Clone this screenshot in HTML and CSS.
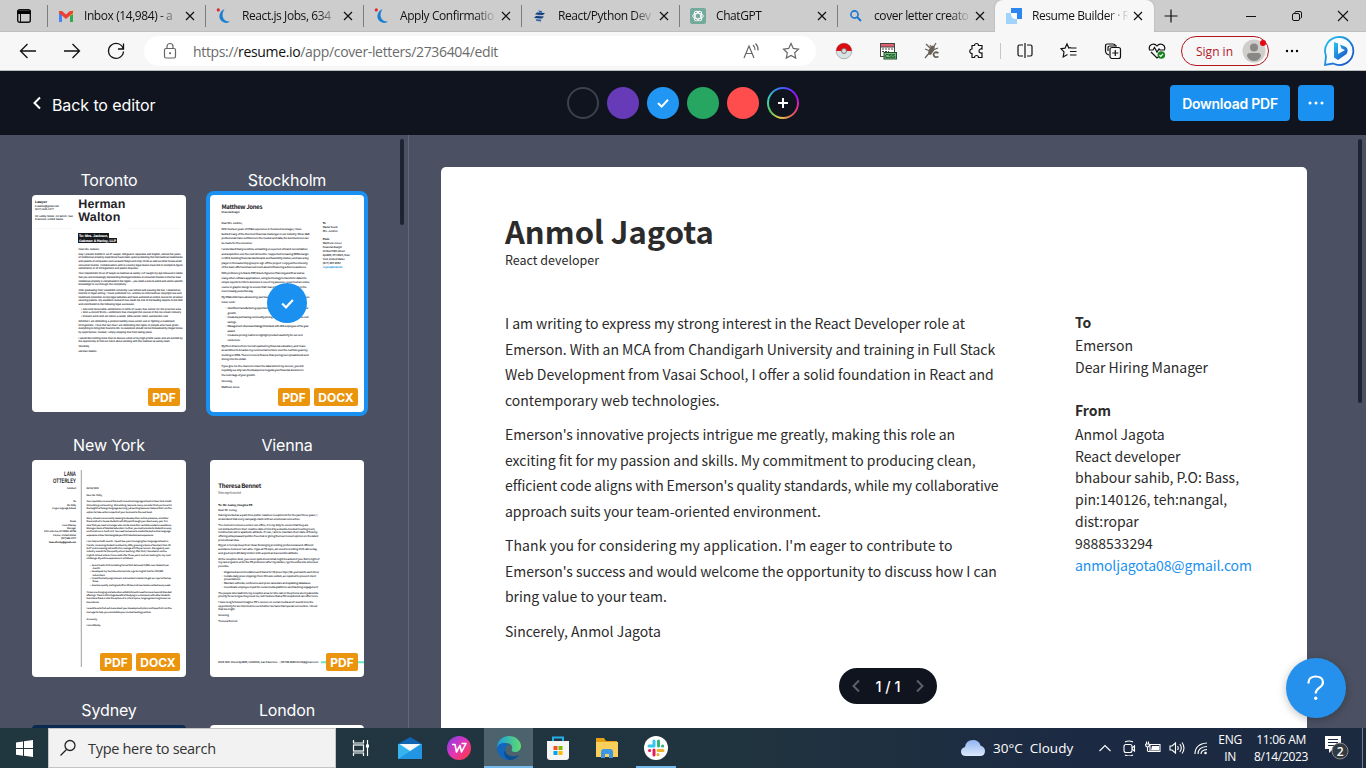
FILE: index.html
```html
<!DOCTYPE html>
<html lang="en">
<head>
<meta charset="utf-8">
<title>Resume Builder · Resume.io</title>
<link rel="stylesheet" href="styles.css">
</head>
<body>
<svg class="defs" width="0" height="0">
  <defs>
    <symbol id="x" viewBox="0 0 10 10"><path d="M1 1l8 8M9 1l-8 8" stroke="#111" stroke-width="1.2" fill="none"/></symbol>
    <symbol id="swoosh" viewBox="0 0 16 16"><path d="M8.500 1C2 4 1.500 12 8 14.500c2.500.8 4.500.3 6-1-4 .2-6.500-1.500-7.300-5C6.200 6 7 3.500 8.500 1z" fill="#1c7fd0"/><circle cx="2.300" cy="1.900" r="1.600" fill="#e0262d"/></symbol>
    <symbol id="tick" viewBox="0 0 14 14"><path d="M2 7l3.600 3.600L12 3.800" stroke="#fff" stroke-width="2" fill="none"/></symbol>
    <linearGradient id="bing" x1="0" y1="0" x2="1" y2="1"><stop offset="0" stop-color="#25c6ee"/><stop offset="1" stop-color="#1b48c8"/></linearGradient>
    <linearGradient id="edge" x1="0" y1="0" x2="1" y2="0"><stop offset="0" stop-color="#1b9de2"/><stop offset="1" stop-color="#5fdc6b"/></linearGradient>
    <linearGradient id="wps" x1="0" y1="0" x2="1" y2="1"><stop offset="0" stop-color="#7a3cf0"/><stop offset=".5" stop-color="#e436b4"/><stop offset="1" stop-color="#ff3a2e"/></linearGradient>
    <linearGradient id="cloud" x1="0" y1="0" x2="0" y2="1"><stop offset="0" stop-color="#8fb4f0"/><stop offset="1" stop-color="#dde9fc"/></linearGradient>
  </defs>
</svg>

<div class="tabs">
  <div class="tab-menu"><svg width="16" height="16" viewBox="0 0 16 16"><rect x="1.700" y="1.700" width="12.600" height="12.600" rx="2" fill="none" stroke="#111" stroke-width="1.400"/><path d="M1.500 2.500h13V6h-13z"/><path d="M4.500 6v8" stroke="#111"/></svg></div>
  <div class="tab"><svg class="fav" viewBox="0 0 16 16"><path d="M1 3v11h3V6z" fill="#4285f4"/><path d="M15 3v11h-3V6z" fill="#34a853"/><path d="M12 4l3-2v4l-3 2z" fill="#fbbc04"/><path d="M1 3l3 0 4 3.500L12 3h3v2L8 11 1 5z" fill="#ea4335"/></svg><span class="tab-text">Inbox (14,984) - a</span><svg class="close"><use href="#x"/></svg></div>
  <div class="tab"><svg class="fav"><use href="#swoosh"/></svg><span class="tab-text">React.js Jobs, 634</span><svg class="close"><use href="#x"/></svg></div>
  <div class="tab"><svg class="fav"><use href="#swoosh"/></svg><span class="tab-text">Apply Confirmatio</span><svg class="close"><use href="#x"/></svg></div>
  <div class="tab"><svg class="fav" viewBox="0 0 16 16"><path d="M6 1l4 2-1 12-4-2z" fill="#a9b9cf"/><path d="M5 4.500l8 .5-2 2-8-.5zM4 8l8 .5-2 2-8-.5z" fill="#123c7c"/><path d="M7 3.500l3 .5M4 12l5 .5" stroke="#2c62ad" stroke-width="1.300"/></svg><span class="tab-text">React/Python Dev</span><svg class="close"><use href="#x"/></svg></div>
  <div class="tab"><svg class="fav" viewBox="0 0 16 16"><rect width="16" height="16" rx="2" fill="#74aa9c"/><g fill="none" stroke="#fff" stroke-width=".9"><ellipse cx="8" cy="8" rx="5.300" ry="2.700"/><ellipse cx="8" cy="8" rx="5.300" ry="2.700" transform="rotate(60 8 8)"/><ellipse cx="8" cy="8" rx="5.300" ry="2.700" transform="rotate(120 8 8)"/></g></svg><span class="tab-text">ChatGPT</span><svg class="close"><use href="#x"/></svg></div>
  <div class="tab"><svg class="fav" viewBox="0 0 16 16"><circle cx="6.500" cy="6.500" r="3.600" fill="none" stroke="#1a76d2" stroke-width="1.600"/><path d="M9 9l4 4" stroke="#1a76d2" stroke-width="2"/></svg><span class="tab-text">cover letter creato</span><svg class="close"><use href="#x"/></svg></div>
  <div class="tab active"><svg class="fav" viewBox="0 0 16 16"><path d="M5 0h11v11h-5L5 5z" fill="#2c87f0"/><path d="M0 5h5c0 4 2 6 6 6v5H0z" fill="#a2d3fb"/><path d="M5 5h6v6c-4 0-6-2-6-6z" fill="#fff"/></svg><span class="tab-text">Resume Builder · R</span><svg class="close"><use href="#x"/></svg></div>
  <div class="new-tab"><svg width="14" height="14" viewBox="0 0 14 14"><path d="M7 .5v13M.5 7h13" stroke="#111" stroke-width="1.200"/></svg></div>
  <div class="window">
    <svg viewBox="0 0 12 12"><path d="M1 6.500h10" stroke="#111"/></svg>
    <svg viewBox="0 0 12 12"><g fill="none" stroke="#111"><rect x="1.500" y="3.500" width="7" height="7" rx="1.500"/><path d="M4 3V2.500Q4 1.500 5 1.500h4q1.500 0 1.500 1.500v4q0 1-1 1.500"/></g></svg>
    <svg viewBox="0 0 12 12"><path d="M1 1l10 10M11 1L1 11" stroke="#111" stroke-width="1.100"/></svg>
  </div>
</div>

<div class="toolbar">
  <div class="nav">
    <svg viewBox="0 0 18 18"><path d="M17 9H1.500M8.500 2l-7 7 7 7" /></svg>
    <svg viewBox="0 0 18 18"><path d="M1 9h15.500M9.500 2l7 7-7 7"/></svg>
    <svg viewBox="0 0 18 18"><path d="M16.300 7A7.500 7.500 0 1 0 16.500 9.500M16.500 1.500v5.500H11"/></svg>
  </div>
  <div class="address">
    <svg class="lock" viewBox="0 0 16 18"><g fill="none" stroke="#666" stroke-width="1.200"><rect x="2.500" y="6.500" width="11" height="9.500" rx="1.500"/><path d="M5 6.500V4.500a3 3 0 0 1 6 0v2"/></g><circle cx="8" cy="11.200" r="1" fill="#555"/></svg>
    <span class="url">https://<b>resume.io</b>/app/cover-letters/2736404/edit</span>
    <svg class="read" viewBox="0 0 18 18"><g fill="none" stroke="#666" stroke-width="1.200"><path d="M2 16L7 4l5 12M4 11.500h6M11 3q2 2 2 5M13.500 1.500q3 3 2.500 7"/></g></svg>
    <svg class="star" viewBox="0 0 18 18"><path d="M9 1.500l2.300 4.900 5.200.7-3.800 3.700 1 5.300L9 13.500l-4.700 2.600 1-5.300L1.500 7.100l5.200-.7z" fill="none" stroke="#666" stroke-width="1.200"/></svg>
  </div>
  <div class="extensions">
    <span><svg viewBox="0 0 18 18"><circle cx="9" cy="9" r="7.800" fill="#d9e2e4" stroke="#777" stroke-width=".5"/><path d="M1.200 9a7.800 7.800 0 0 1 15.600 0z" fill="#dc0d12"/><circle cx="9" cy="9" r="2.500" fill="#ddd" stroke="#777"/></svg></span>
    <span><svg viewBox="0 0 18 18"><rect x="1.500" y="1.500" width="14" height="13" fill="#fff" stroke="#444"/><path d="M1.500 1.500h14v3.500h-14z" fill="#dc5f6e" stroke="#444"/><path d="M3 7h11M3 9.500h7" stroke="#444" stroke-dasharray="2 1"/><rect x="5" y="10.500" width="12.500" height="6.500" fill="#6fc27a" stroke="#244f2c"/><text x="6" y="16" font-size="5.500" font-weight="700" textLength="10.500" fill="#143c1c" font-family="Liberation Sans">CSS</text></svg></span>
    <span><svg viewBox="0 0 18 18"><g stroke="#675e56" stroke-width="1.200" fill="none"><path d="M3 2l4 4M13 1l-3 5M2 7l5 2M15 6l-5 2M2 16l5-6M7 3l2 3"/></g><ellipse cx="8.500" cy="8" rx="2.500" ry="5" fill="#675e56" transform="rotate(25 8 8)"/><path d="M15.500 11q-4-2-5 1.500 1 4 5 2" fill="none" stroke="#f7f7f7" stroke-width="3.500"/><path d="M15.500 11q-4-2-5 1.500 1 4 5 2" fill="none" stroke="#675e56" stroke-width="1.800"/></svg></span>
    <span><svg viewBox="0 0 18 18" class="line"><path d="M5 3.500h2.500a2 2 0 1 1 4 0h3.500v3.500c-4-.8-4 4.600 0 4v4.500h-3.500a2 2 0 1 0-4 0H5V11.500a2 2 0 1 1 0-4.500z"/></svg></span>
    <i class="divider"></i>
    <span><svg viewBox="0 0 18 18" class="line"><path d="M7 3H3.500Q2 3 2 4.500v8Q2 14 3.500 14H7M11 3h3.500Q16 3 16 4.500v8q0 1.500-1.500 1.500H11M9 1v15"/></svg></span>
    <span><svg viewBox="0 0 18 18" class="line"><path d="M11 5.500L8.800 6 7 2 5 6.200l-4 .5 3 3.200-.8 5L7.500 12.500M10.500 6h6M10 9.500h6.500M10 13h6.500"/></svg></span>
    <span><svg viewBox="0 0 18 18" class="line"><path d="M5 13L3 12Q1.500 11 1.500 9V4q0-2 2-2H9q2 0 2.500 2"/><path d="M4 9V6q0-2 2-2h7"/><rect x="6" y="5.500" width="10.500" height="11" rx="2"/><path d="M11.300 8v6M8.300 11h6"/></svg></span>
    <span><svg viewBox="0 0 18 18" class="line"><path d="M1.500 7.500C0 3 6 0 9 4c3-4 9-1 7.500 3.500M1 8h4l1.500-2.500L9 10l2-3 1 1h5M3 10l6 6 2-1.500"/><circle cx="13.300" cy="13" r="3.800" fill="#16831f" stroke="none"/><path d="M11.500 13l1.300 1.300 2.200-2.500" stroke="#fff"/></svg></span>
  </div>
  <div class="signin"><span>Sign in</span><svg width="24" height="24" viewBox="0 0 24 24"><circle cx="12" cy="12" r="11.500" fill="#d0cecb"/><circle cx="12" cy="8.500" r="4" fill="#8a8886"/><path d="M5 17q0-3 3-3h8q3 0 3 3-2 5-7 5t-7-5z" fill="#8a8886"/><circle cx="21" cy="4" r="3" fill="#e30613"/></svg></div>
  <svg class="more" viewBox="0 0 14 4"><circle cx="2" cy="2" r="1.200"/><circle cx="7" cy="2" r="1.200"/><circle cx="12" cy="2" r="1.200"/></svg>
  <svg class="bing" viewBox="0 0 32 32"><path d="M16 2a14 14 0 1 1-6 26.500L2 30l1-9A14 14 0 0 1 16 2z" fill="#f9fcff" stroke="url(#bing)" stroke-width="1.800"/><path d="M11 7l4 1.500V19l7-4-3.500-1.500L17 9.500 23 12q3 3 .5 7L15 25l-4-2.500z" fill="url(#bing)"/></svg>
</div>

<header class="header">
  <div class="back"><svg width="10" height="14" viewBox="0 0 10 14"><path d="M8 1.500L2.500 7 8 12.500" fill="none" stroke="#fff" stroke-width="2"/></svg><span>Back to editor</span></div>
  <div class="colors">
    <i class="c-dark"></i><i class="c-purple"></i><i class="c-blue"><svg width="14" height="14"><use href="#tick"/></svg></i><i class="c-green"></i><i class="c-red"></i>
    <i class="c-any"><b><svg width="10" height="10" viewBox="0 0 10 10"><path d="M5 0v10M0 5h10" stroke="#fff" stroke-width="2"/></svg></b></i>
  </div>
  <div class="actions"><button class="download"><span>Download PDF</span></button><button class="dots"><svg width="16" height="4" viewBox="0 0 16 4"><g fill="#fff"><circle cx="2" cy="2" r="1.500"/><circle cx="8" cy="2" r="1.500"/><circle cx="14" cy="2" r="1.500"/></g></svg></button></div>
</header>

<main class="workspace">
  <aside class="sidebar">
    <div class="card"><h3>Toronto</h3><div class="thumb">
      <svg class="page toronto" viewBox="0 0 154 217">
        <g class="big"><text x="46.300" y="13.300" textLength="47">Herman</text><text x="46.300" y="25.700" textLength="42">Walton</text></g>
        <g class="s"><text x="3" y="8" class="b lead" textLength="12">Lawyer</text><text x="3" y="11.800" textLength="24">h.walton@gmail.com</text><text x="3" y="15.300" textLength="19">(917) 605-1277</text><text x="3" y="21.500" textLength="38">32 Ludley Street, CA 94101, San</text><text x="3" y="25" textLength="28">Francisco, United States</text></g>
        <path d="M3 33.500h38M96 33.500h53" stroke="#eee" stroke-width=".5"/>
        <path d="M46 38h31v5H46zM46 43h39v5H46z" fill="#16181d"/>
        <g class="s b inv"><text x="47" y="41.800" textLength="29">To: Mrs. Jackson,</text><text x="47" y="46.700" textLength="37">Oakman &amp; Harley, LLP</text></g>
        <g class="s"><text x="46.500" y="54.600" textLength="21">Dear Mrs. Jackson,</text>
        <text x="46.500" y="59.800" textLength="102">May I present Exhibit A: an IP Lawyer, bilingual in Japanese and English, whose five years</text><text x="46.500" y="63.400" textLength="104">of intellectual property experience have been spent protecting the international trademarks</text><text x="46.500" y="67" textLength="103">and patents of companies such as Bank Tokyo and Crop Circle as well as other house-sized</text><text x="46.500" y="70.500" textLength="104">consumer brands. Collaborations with in-country legal teams have led to multiple 5-figure</text><text x="46.500" y="74" textLength="60">settlements in IP infringement and patent disputes.</text>
        <text x="46.500" y="79.300" textLength="104">Your requirement for an IP lawyer at Oakman &amp; Harley LLP caught my eye because it needs</text><text x="46.500" y="82.900" textLength="103">that you are increasingly representing the legal interests of consumer brands in the Far East.</text><text x="46.500" y="86.500" textLength="104">Intellectual property is complicated in the region – you need a one-of-a-kind and sector-specific</text><text x="46.500" y="90" textLength="48">knowledge to cut through the complexity.</text>
        <text x="46.500" y="95.500" textLength="102">After graduating from Vanderbilt University Law School and passing the bar, I retained an</text><text x="46.500" y="99" textLength="103">interest in legal writing. I have published 10+ articles on international copyright law and</text><text x="46.500" y="102.500" textLength="104">trademark protection on top legal websites and have authored an online course for all about</text><text x="46.500" y="106" textLength="104">securing patents. My academic research has made me one of the leading experts in the field</text><text x="46.500" y="109.500" textLength="56">and contributed to the following legal successes:</text>
        <text x="49" y="114.600" textLength="100">•  Secured favourable settlements in 92% of cases that center for the practice area</text><text x="49" y="118.300" textLength="100">•  Won a record $10m+ settlement that changed the course of the ice-cream industry</text><text x="49" y="122" textLength="87">•  Present work with all clients a week, 95% career client satisfaction rate</text>
        <text x="46.500" y="127" textLength="96">Whether I am defending a product liability class action suit or fighting a trademark</text><text x="46.500" y="130.600" textLength="100">infringement, I love the fact that I am defending the rights of people who have given</text><text x="46.500" y="134.200" textLength="104">everything to bring their brand to life. Its existence should not be threatened by illegal forces</text><text x="46.500" y="137.800" textLength="74">by opportunists. Instead, I enjoy stopping that from taking place.</text>
        <text x="46.500" y="143.500" textLength="104">I would like nothing more than to discuss some of my high-profile cases and am excited by</text><text x="46.500" y="147" textLength="92">the opportunity to find out more about working with the Oakman &amp; Harley team.</text><text x="46.500" y="152" textLength="11">Sincerely,</text><text x="46.500" y="157.200" textLength="18">Herman Walton</text></g>
      </svg>
      <div class="badges"><b class="pdf">PDF</b></div></div></div>
    <div class="card selected"><h3>Stockholm</h3><div class="thumb">
      <svg class="page" viewBox="0 0 154 217">
        <text x="11.500" y="14" class="name" textLength="41">Matthew Jones</text>
        <g class="s"><text x="11.500" y="18" textLength="18">Financial Analyst</text><text x="11.500" y="29" textLength="21">Dear Mrs. Jenkins,</text>
        <text x="11.500" y="35.300" textLength="80">With fourteen years of FP&amp;A experience in food and beverages, I have</text><text x="11.500" y="39.700" textLength="88">tackled many of the thorniest financial challenges in our industry. When F&amp;B</text><text x="11.500" y="44.200" textLength="87">professionals have confidence in the models and data, the best decisions can</text><text x="11.500" y="48.800" textLength="31">be made for the consumer.</text>
        <text x="11.500" y="55" textLength="86">I understand that you will be embarking on a period of brand consolidation</text><text x="11.500" y="59.500" textLength="87">and acquisition over the next 18 months. I supported increasing 500% margin</text><text x="11.500" y="64" textLength="87">in 2015, building financial dashboards and feasibility studies, and was a key</text><text x="11.500" y="68.500" textLength="86">player in the leadership group to sign off the project. I enjoyed the intensity</text><text x="11.500" y="73" textLength="85">of the team effort and learned much about influencing a diverse audience.</text>
        <text x="11.500" y="79.200" textLength="83">With proficiency in Oracle ERP, Oracle Hyperion Planning and BI as well as</text><text x="11.500" y="83.700" textLength="85">many other software applications, using technology to transform data into</text><text x="11.500" y="88.200" textLength="88">simple reports to inform decisions is one of my passions. I even took an online</text><text x="11.500" y="92.700" textLength="85">course in graphic design to ensure that I was presenting my findings in the</text><text x="11.500" y="97.200" textLength="32">most visually powerful way.</text>
        <text x="11.500" y="103.300" textLength="88">My FP&amp;A skills have allowed my past teams to excel at the following business</text><text x="11.500" y="107.700" textLength="14">lower costs:</text>
        <text x="14.500" y="114" textLength="84">•  Identified manufacturing opportunities to reduce costs and increase our</text><text x="17.500" y="118.500" textLength="9">growth.</text><text x="14.500" y="123" textLength="84">•  Created a purchasing commodity pricing tool and dashboard to drive cost</text><text x="17.500" y="127.500" textLength="9">savings.</text><text x="14.500" y="132" textLength="84">•  Management of annual strategy think tank with 200 employees of the year</text><text x="17.500" y="136.500" textLength="8">award.</text><text x="14.500" y="141.200" textLength="78">•  Created a pricing matrix to highlight product elasticity for our end</text><text x="17.500" y="145.700" textLength="13">customers.</text>
        <text x="11.500" y="151.800" textLength="84">My BS in Finance from Cornell sparked my financial education, and I have</text><text x="11.500" y="156.300" textLength="86">an ambition to broaden my commercial horizons over the next two years by</text><text x="11.500" y="160.800" textLength="87">working on MBA. There is more to finance than poring over spreadsheets and</text><text x="11.500" y="165.300" textLength="25">diving into the detail.</text>
        <text x="11.500" y="171.500" textLength="82">If you give me the chance to share the data behind my success, you will</text><text x="11.500" y="176" textLength="82">hopefully see why I am the ideal person to guide your financial decisions in</text><text x="11.500" y="180.500" textLength="34">the next stage of your growth.</text><text x="11.500" y="186.500" textLength="11">Sincerely,</text><text x="11.500" y="192.700" textLength="18">Matthew Jones</text>
        <text x="112.700" y="29" class="b">To</text><text x="112.700" y="33.200" textLength="15">Master Foods</text><text x="112.700" y="37.300" textLength="15">Mrs. Jenkins</text><text x="112.700" y="45" class="b">From</text><text x="112.700" y="49" textLength="19">Matthew Jones</text><text x="112.700" y="53" textLength="19">Financial Analyst</text><text x="112.700" y="57" textLength="22">24 West 78th Street</text><text x="112.700" y="61" textLength="27">Apt#3B, NY 10024, New</text><text x="112.700" y="65" textLength="22">York, United States</text><text x="112.700" y="69" textLength="18">(917) 397-3552</text><text x="112.700" y="73" textLength="20" class="mail">m.jones@mail.com</text></g>
      </svg>
      <i class="chosen"><svg width="15" height="15"><use href="#tick"/></svg></i>
      <div class="badges"><b class="pdf">PDF</b><b class="docx">DOCX</b></div></div></div>
    <div class="card"><h3>New York</h3><div class="thumb">
      <svg class="page" viewBox="0 0 154 217">
        <g class="cond"><text x="32" y="16" textLength="12" lengthAdjust="spacingAndGlyphs">LANA</text><text x="21" y="22.700" textLength="23" lengthAdjust="spacingAndGlyphs">OTTERLEY</text></g>
        <path d="M49.300 10v197" stroke="#888" stroke-width=".8"/>
        <g class="s end tiny"><text x="44" y="29" textLength="9">Assistant</text><text x="44" y="42" class="b">To</text><text x="44" y="45.500" textLength="9">Ms. Patty</text><text x="44" y="49" textLength="24">Lingo Language School</text><text x="44" y="62" class="b">From</text><text x="44" y="65.500" textLength="14">Lana Otterley</text><text x="44" y="69" textLength="9">Manager</text><text x="44" y="72.300" textLength="32">123 Lanta Ave, NY 10001, 80706</text><text x="44" y="75.500" textLength="23">Fresno, United States</text><text x="44" y="79" textLength="15">(917) 868-2227</text><text x="44" y="82.500" class="b" textLength="27">lana.otterley@gmail.com</text></g>
        <g class="s tiny"><text x="54.500" y="28.600" textLength="12">08/18/2020</text><text x="54.500" y="35.500" textLength="16">Dear Ms. Patty,</text>
        <text x="54.500" y="42" textLength="85">Your reputation as one of the most innovative language schools in New York is both</text><text x="54.500" y="45.500" textLength="85">stimulating and exciting. Stimulating, because many consider that you have hit</text><text x="54.500" y="49" textLength="85">the heights of foreign language learning, yet exciting because I believe that I am the</text><text x="54.500" y="52.500" textLength="66">option to take certain aspects of your business to the next level.</text>
        <text x="54.500" y="59" textLength="82">Many schools are currently seeking to develop their online presence, and other</text><text x="54.500" y="62.300" textLength="81">thousands of in-house students will still pass through your doors every year. It is</text><text x="54.500" y="65.700" textLength="85">clear that you need a manager who can be more than versatile academic excellence.</text><text x="54.500" y="69" textLength="85">Manage a team of talented educators. Further, you must provide to students an easy</text><text x="54.500" y="72.300" textLength="84">and hands-on in-built visit. You need someone to create the best online language</text><text x="54.500" y="75.700" textLength="67">experience in New York alongside your first-rate classroom experience.</text>
        <text x="54.500" y="82.300" textLength="82">I can help on both counts. I spent two years managing four language schools in</text><text x="54.500" y="85.700" textLength="84">Florida, increasing student numbers by 30%, growing a team of teachers from 20</text><text x="54.500" y="89" textLength="83">to 47 and increasing net profit at an average of 17% per annum. We regularly won</text><text x="54.500" y="92.300" textLength="80">industry awards for the quality of our teaching. After that, I founded an online</text><text x="54.500" y="95.700" textLength="84">English school where I have sold after three years and am looking for my next</text><text x="54.500" y="99" textLength="47">challenge. My entire experience is as follows:</text>
        <text x="57" y="105.500" textLength="80">•  Social media first marketing funnel that delivered 2,000+ new students per</text><text x="60.500" y="108.800" textLength="8">month.</text><text x="57" y="112.200" textLength="74">•  Developed my YouTube channel into a go-to English hub for 220,000</text><text x="60.500" y="115.500" textLength="13">subscribers.</text><text x="57" y="119" textLength="82">•  Hired the best programmers and content creators to get our app to the top</text><text x="60.500" y="122.300" textLength="6">three.</text><text x="57" y="125.700" textLength="82">•  Oversaw quality and signed off on 30 hours of new lesson content every week.</text>
        <text x="54.500" y="132.500" textLength="85">Times are changing and education establishments need to move towards blended</text><text x="54.500" y="135.800" textLength="84">offerings. There is still a huge benefit of studying in a classroom with other students,</text><text x="54.500" y="139.200" textLength="84">but where there is also the option of a virtual space, language learning knows no</text><text x="54.500" y="142.500" textLength="13">boundaries.</text><text x="54.500" y="149.300" textLength="85">I would love to find out more about your development plans and hope that I am the</text><text x="54.500" y="152.600" textLength="65">manager to help you consolidate your market-leading position.</text><text x="54.500" y="159.500" textLength="11">Sincerely,</text><text x="54.500" y="166" textLength="14">Lana Otterley</text></g>
      </svg>
      <div class="badges"><b class="pdf">PDF</b><b class="docx">DOCX</b></div></div></div>
    <div class="card"><h3>Vienna</h3><div class="thumb">
      <svg class="page" viewBox="0 0 154 217">
        <text x="8.300" y="27.500" class="name" textLength="43">Theresa Bennet</text><text x="8.300" y="33.800" class="s role" textLength="23">Receptionist</text>
        <g class="s"><text x="8.300" y="46.300" class="b" textLength="34">To: Mr. Lesley, Imagine PR</text><text x="8.300" y="50.800" textLength="19">Dear Mr. Lesley,</text>
        <text x="8.300" y="56.200" textLength="99">Having worked as a part-time public relations receptionist for the past three years, I</text><text x="8.300" y="60.200" textLength="82">understand that every campaign starts with an emotional connection.</text>
        <text x="8.300" y="65.500" textLength="90">The moment someone enters our office, it is my duty to ensure that they are</text><text x="8.300" y="69.500" textLength="97">not distracted from their creative state of mind by a double-booked meeting room,</text><text x="8.300" y="73.200" textLength="99">misdirected call or apathetic attitude. If I can, I aim to maintain their state of flow by</text><text x="8.300" y="77" textLength="100">offering extra pleasant politics free chat or giving them an honest opinion on the latest</text><text x="8.300" y="80.800" textLength="21">promotional idea.</text>
        <text x="8.300" y="86.200" textLength="95">My job is to help keep their ideas flowing by providing professional and efficient</text><text x="8.300" y="90.200" textLength="99">assistance however I am able. I type at 70 wpm, am used to working 24/5 calls a day,</text><text x="8.300" y="94.200" textLength="80">and greet up to 80 daily visitors with a quick and accessible attitude.</text>
        <text x="8.300" y="99.500" textLength="101">At the reception desk, you never quite know what might be asked of you. But in light of</text><text x="8.300" y="103.300" textLength="100">my career goal to enter the PR profession after my studies, I go the extra mile whenever</text><text x="8.300" y="107.200" textLength="11">possible.</text>
        <text x="11" y="112.600" textLength="98">•  Organised accommodation and travel for 40 press trips (40+ journalists each time)</text><text x="11" y="116.500" textLength="95">•  Collate daily press clippings from 20 news outlets, as required to present client</text><text x="14" y="120.400" textLength="17">presentations.</text><text x="11" y="124.300" textLength="90">•  Maintain editorial, conference and press calendars and updating databases.</text><text x="11" y="128.200" textLength="97">•  Coordinate employee input for social media platforms and tracking engagement</text>
        <text x="8.300" y="133.500" textLength="100">The people who walk into my reception area (or who call on the phone) are my absolute</text><text x="8.300" y="137.300" textLength="100">priority for as long as they need me, but I believe that a PR receptionist can offer more.</text><text x="8.300" y="142.700" textLength="95">I have long followed Imagine PR's success on social media and I would love the</text><text x="8.300" y="146.500" textLength="99">opportunity for an interview to see whether we have that special connection. I know</text><text x="8.300" y="150.300" textLength="17">that we might.</text><text x="8.300" y="155.700" textLength="11">Sincerely,</text><text x="8.300" y="161.500" textLength="19">Theresa Bennet</text>
        <text x="8.300" y="203.300" textLength="100">8420 19th Street Apt#9B, CA 94016, San Francisco   •(55 788 9695   tb123@gmail.com</text></g>
        <path d="M111 202.300h43" stroke="#6ce3c0" stroke-width="2"/>
      </svg>
      <div class="badges"><b class="pdf">PDF</b></div></div></div>
    <div class="card"><h3>Sydney</h3><div class="thumb navy"></div></div>
    <div class="card"><h3>London</h3><div class="thumb"></div></div>
    <i class="scroll"></i>
  </aside>
  <section class="preview">
    <article class="sheet">
      <h1>Anmol Jagota</h1>
      <div class="job">React developer</div>
      <div class="columns">
        <div class="letter">
          <p><span class="snug">I am writing to express my strong interest in the React Developer role at</span><br><span class="snug">Emerson. With an MCA from Chandigarh University and training in Full Stack</span><br>Web Development from Vasai School, I offer a solid foundation in React and<br>contemporary web technologies.</p>
          <p><span class="snug">Emerson's innovative projects intrigue me greatly, making this role an</span><br><span class="snug">exciting fit for my passion and skills. My commitment to producing clean,</span><br><span class="tight">efficient code aligns with Emerson's quality standards, while my collaborative</span><br><span class="snug">approach suits your team-oriented environment.</span></p>
          <p><span class="loose">Thank you for considering my application. I'm eager to contribute to</span><br><span class="snug">Emerson's success and would welcome the opportunity to discuss how I can</span><br><span class="snug">bring value to your team.</span></p>
          <p>Sincerely, Anmol Jagota</p>
        </div>
        <div class="contact">
          <h4>To</h4><p>Emerson<br>Dear Hiring Manager</p>
          <h4>From</h4><p>Anmol Jagota<br>React developer<br>bhabour sahib, P.O: Bass,<br>pin:140126, teh:nangal,<br>dist:ropar<br>9888533294<br><a>anmoljagota08@gmail.com</a></p>
        </div>
      </div>
    </article>
    <div class="pager"><svg width="8" height="14" viewBox="0 0 8 14"><path d="M7 1.500L1.500 7 7 12.500"/></svg><span>1 / 1</span><svg width="8" height="14" viewBox="0 0 8 14"><path d="M1 1.500L6.500 7 1 12.500"/></svg></div>
    <div class="help"><svg width="18" height="26" viewBox="0 0 18 26"><path d="M1.500 8.500V7.500C1.500 3.500 5 1.500 8.700 1.500c4 0 7.300 2 7.300 5.800 0 5.700-7.300 5.200-7.300 11.200" fill="none" stroke="#fff" stroke-width="2.200"/><circle cx="8.700" cy="23.200" r="1.700" fill="#fff"/></svg></div>
    <i class="scroll wide"></i>
  </section>
</main>

<footer class="taskbar">
  <div class="start"><svg width="17" height="17" viewBox="0 0 17 17"><path d="M0 2.400l7-1v6.700H0zM8 1.300L17 0v8.100H8zM0 9h7v6.700l-7-1zM8 9h9v8l-9-1.300z" fill="#fff"/></svg></div>
  <div class="search"><svg width="18" height="18" viewBox="0 0 18 18"><circle cx="11" cy="6.500" r="5" fill="none" stroke="#222" stroke-width="1.300"/><path d="M7.500 10.500L1.500 16.500" stroke="#222" stroke-width="1.300"/></svg><span>Type here to search</span></div>
  <div class="apps">
    <span><svg viewBox="0 0 24 24"><g fill="none" stroke="#fff" stroke-width="1.200"><path d="M4.500 4v3h10V4M4.500 20v-3h10v3"/><rect x="4.500" y="9" width="10" height="6"/><path d="M18.500 4v16"/></g><path d="M17 8.500h3v3h-3z" fill="#fff"/></svg></span>
    <span><svg viewBox="0 0 24 24"><path d="M0 8L12 1l12 7z" fill="#1064b4"/><path d="M0 8v15h24V8z" fill="#35b4f0"/><path d="M0 23L24 8v15z" fill="#2296e2"/><path d="M1.500 8h21L12 15z" fill="#f5f8fb"/></svg></span>
    <span><svg viewBox="0 0 24 24"><circle cx="12" cy="12" r="12" fill="url(#wps)"/><path d="M5 8.500h3l1.500 7.500L13 9.500l1.500 6.500L19 7.500h-4.500" fill="none" stroke="#fff" stroke-width="1.600" stroke-linejoin="round"/></svg></span>
    <span class="on"><svg viewBox="0 0 24 24"><path d="M0 12C0 5 5 0 12 0s12 5 12 10c0 4-3 6-6 6-3 0-4-1-3-3 1-4-2-6-6-6-5 0-8 2-9 5z" fill="url(#edge)"/><path d="M0 12c2-6 10-6 12-3-5 1-5 8-1 11 4 2 8 1 11-1-3 4-6 5-10 5C5 24 0 18 0 12z" fill="#1267bd"/><path d="M8 14c0 6 8 8 14 5-3 4-6 5-10 5-4-2-6-6-4-10z" fill="#0d4d93"/></svg></span>
    <span><svg viewBox="0 0 24 24"><path d="M7 6V1.500h10V6" fill="none" stroke="#22b0ea" stroke-width="2"/><path d="M1 5h22v16q0 3-3 3H4q-3 0-3-3z" fill="#f5f5f5"/><path d="M7.500 10h4v4h-4z" fill="#f25022"/><path d="M12.500 10h4v4h-4z" fill="#7fba00"/><path d="M7.500 15h4v4h-4z" fill="#00a4ef"/><path d="M12.500 15h4v4h-4z" fill="#ffb900"/></svg></span>
    <span><svg viewBox="0 0 24 24"><path d="M1 2h8l2 3h11v4H1z" fill="#e6a015"/><path d="M1 6h22v15H1z" fill="#fbd05a"/><path d="M6 22v-6q0-3 3-3h6q3 0 3 3v6h-4v-4h-4v4z" fill="#3c96e4"/></svg></span>
    <span class="open"><svg viewBox="0 0 24 24"><circle cx="12" cy="12" r="12" fill="#fff"/><g stroke-width="3" stroke-linecap="round"><path d="M10 5v5M5 10h4" stroke="#36c5f0"/><path d="M14.500 5v5M18.500 10h.2" stroke="#2eb67d"/><path d="M14 14.500h5M14 18.500v.2" stroke="#ecb22e"/><path d="M10 14v5M5.500 14.500h.2" stroke="#e01e5a"/></g></svg></span>
  </div>
  <div class="weather"><svg width="24" height="17" viewBox="0 0 24 17"><path d="M5 16q-5 0-5-4.500Q0 8 4 7q1-7 8-7 6 0 7.500 5.500Q24 7 24 11q0 5-5 5z" fill="url(#cloud)"/></svg><span>30°C&nbsp; Cloudy</span></div>
  <div class="tray">
    <svg viewBox="0 0 16 16"><path d="M2.500 11L8 5.500l5.500 5.500"/></svg>
    <svg viewBox="0 0 16 16"><path d="M4 2q4-2 8 0M4 15q4 2 8 0"/><rect x="3" y="4.500" width="8" height="8" rx="2"/><path d="M11 8l2.500-2v5L11 9"/></svg>
    <svg viewBox="0 0 16 16"><path d="M5 11.500V4.500h10v7H3"/><path d="M7 6h7v4.500H6z" fill="#fff" stroke="none"/><path d="M.5 4h4M1.500 1.500V4M3.500 1.500V4M.5 4q0 3 2 3t2-3M2.500 7v4.500"/></svg>
    <svg viewBox="0 0 16 16"><path d="M1 6v4h2l3.500 3V3L3 6zM8.500 6q1.500 2 0 4M10.800 4q3 4 0 8M13 2.500q4 5.500 0 11"/></svg>
    <svg viewBox="0 0 16 16"><path d="M2 14Q2 4 14 3M5 14q0-7 9-7.500M8 14q0-4 6-4.500"/><circle cx="12.500" cy="13" r="1.300" fill="#fff" stroke="none"/></svg>
  </div>
  <div class="lang"><span>ENG</span><span>IN</span></div>
  <div class="clock"><span>11:06 AM</span><span>8/14/2023</span></div>
  <div class="notify"><svg width="26" height="26" viewBox="0 0 26 26"><path d="M1 1h16v13h-8l-4 4v-4H1z" fill="#fff"/><path d="M4 4.500h10M4 7.500h10M4 10.500h7" stroke="#1d2c42" stroke-width="1.200"/><circle cx="16" cy="16" r="8" fill="#333b42" stroke="#888"/><text x="12.700" y="20.500" fill="#fff" font-size="12" font-family="Open Sans" font-weight="600">2</text></svg></div>
  <i class="peek"></i>
</footer>
</body>
</html>
```
FILE: styles.css
```css
* { box-sizing: border-box; }
html, body { margin: 0; height: 768px; overflow: hidden; }
body { width: 1366px; display: flex; flex-direction: column; font-family: "Open Sans", "Noto Sans", sans-serif; color: #111; white-space: nowrap; }
.defs { position: absolute; }
svg { display: block; flex: none; }
h1, h3, h4, p { margin: 0; font-weight: 400; }
i { font-style: normal; display: block; }

.tabs { height: 32px; flex: none; background: #cdcdcd; display: flex; align-items: stretch; font-size: 12px; box-shadow: inset 0 -1px #bfbfbf; }
.tab-menu { width: 47px; display: flex; align-items: center; justify-content: center; }
.tab { width: 158px; border-left: 1px solid #858585; border-image: linear-gradient(transparent 6px, #7c7c7c 6px, #7c7c7c 26px, transparent 26px) 1; display: flex; align-items: center; padding-left: 10px; }
.tab.active { width: 159px; background: #f7f7f7; border: 0; padding-left: 11px; border-radius: 8px 8px 0 0; box-shadow: 0 0 2px #aaa; clip-path: inset(0 -3px 0 -3px); }
.fav { width: 16px; height: 16px; margin-right: 10px; }
.tab-text { width: 100px; margin-right: -7px; letter-spacing: -.42px; -webkit-mask-image: linear-gradient(90deg, #000 75%, transparent 97%); mask-image: linear-gradient(90deg, #000 75%, transparent 97%); line-height: 20px; }
.close { width: 10px; height: 10px; margin-left: 8px; }
.new-tab { width: 34px; display: flex; align-items: center; justify-content: center; }
.window { margin-left: auto; display: flex; align-items: center; gap: 34px; padding-right: 17px; }
.window svg { width: 12px; height: 12px; }

.toolbar { height: 39px; flex: none; background: #f7f7f7; border-bottom: 1px solid #b9c1bb; display: flex; align-items: center; }
.nav { width: 144px; display: flex; gap: 26px; padding-left: 19px; }
.nav svg { width: 18px; height: 18px; fill: none; stroke: #111; stroke-width: 1.3; }
.address { width: 672px; height: 30px; border-radius: 15px; background: #fff; display: flex; align-items: center; padding: 0 16px 0 18px; color: #6b6b6b; font-size: 14px; }
.address b { font-weight: 400; color: #111; }
.lock { width: 16px; height: 18px; margin-right: 15px; }
.url { letter-spacing: -.34px; }
.read { width: 18px; height: 18px; margin-left: auto; margin-right: 22px; }
.star { width: 18px; height: 18px; }
.extensions { display: flex; align-items: center; margin-left: 6px; }
.extensions span { width: 44px; display: flex; justify-content: center; }
.extensions svg { width: 18px; height: 18px; }
.line { fill: none; stroke: #111; stroke-width: 1.2; }
.divider { width: 1px; height: 16px; background: #c6c6c6; margin: 0 2px; }
.signin { width: 88px; height: 30px; border: 1px solid #b3161f; border-radius: 15px; margin-left: 2px; color: #b3161f; display: flex; align-items: center; justify-content: space-between; padding: 0 2px 0 14px; font-size: 12px; }
.more { width: 14px; height: 4px; margin-left: 16px; }
.bing { width: 32px; height: 32px; margin-left: 24px; }

.header { height: 64px; flex: none; background: #0f141e; display: grid; grid-template-columns: 567px 232px 1fr; align-items: center; font-family: Inter, sans-serif; color: #fff; }
.back { display: flex; align-items: center; gap: 10px; padding-left: 32px; font-size: 16px; letter-spacing: -.1px; }
.back span { padding-top: 4px; }
.colors { display: flex; gap: 8px; }
.colors i { width: 32px; height: 32px; border-radius: 50%; display: flex; align-items: center; justify-content: center; }
.c-dark { border: 2px solid #3c414b; }
.c-purple { background: #673ab7; }
.c-blue { background: #2196f3; }
.c-green { background: #26a660; }
.c-red { background: #ff4d4d; }
.c-any { background: conic-gradient(#3b5bff, #a010ff 60deg, #e0259f 100deg, #e05a5a 140deg, #e8c84a 190deg, #62c85a 235deg, #35d0c0 290deg, #3b5bff); }
.c-any b { width: 28px; height: 28px; border-radius: 50%; background: #0f141e; display: flex; align-items: center; justify-content: center; }
.actions { display: flex; justify-content: flex-end; gap: 8px; padding-right: 32px; }
.actions button { height: 36px; border: 0; border-radius: 4px; background: #1a91f0; color: #fff; padding: 0; display: flex; align-items: center; justify-content: center; font: 600 14px Inter, sans-serif; letter-spacing: -.25px; }
.download { width: 120px; }
.dots { width: 36px; }

.workspace { height: 593px; flex: none; display: flex; background: #4b5162; overflow: hidden; }
.sidebar { position: relative; width: 409px; border-right: 1px solid #626878; padding: 33px 0 0 32px; display: grid; grid-template-columns: 154px 154px; grid-auto-rows: 244px; gap: 21px 24px; overflow: hidden; }
.card h3 { font: 400 16px/24px Inter, sans-serif; letter-spacing: -.15px; color: #fff; text-align: center; margin-bottom: 3px; }
.thumb { position: relative; height: 217px; background: #fff; border-radius: 4px; }
.thumb.navy { background: #0b2a52; }
.selected .thumb { box-shadow: 0 0 0 4px #1a91f0; }
.page { width: 154px; height: 217px; font-family: "Noto Sans CJK SC", "Noto Sans", sans-serif; fill: #1f2329; text-rendering: geometricPrecision; }
.toronto { font-family: "Liberation Sans", sans-serif; }
.big { font: 700 12.500px "Liberation Sans", sans-serif; }
.name { font-size: 6.100px; font-weight: 700; }
.s { font-size: 2.600px; fill: #484b50; stroke: #484b50; stroke-width: .1px; }
.tiny { font-size: 2.300px; }
.role { font-size: 3.800px; stroke: none; }
.s .b, .s.b { font-weight: 700; fill: #222; }
.s .lead { font-size: 3.400px; }
.s.inv { fill: #fff; stroke: #fff; font-size: 3.400px; }
.s .mail { fill: #2c9be0; stroke: #2c9be0; }
.end { text-anchor: end; }
.cond { font: 700 6.500px "Liberation Sans", sans-serif; }
.badges { position: absolute; right: 6px; bottom: 6px; display: flex; gap: 4px; }
.badges b { height: 18px; border-radius: 2px; background: #eb940d; color: #fff; font: 700 12px/19px Inter, sans-serif; text-align: center; }
.pdf { width: 32px; }
.docx { width: 44px; }
.chosen { position: absolute; left: 57px; top: 88px; width: 40px; height: 40px; border-radius: 50%; background: #1a91f0; display: flex; align-items: center; justify-content: center; }
.scroll { position: absolute; right: 4px; top: 4px; width: 4px; height: 86px; border-radius: 2px; background: #1e2532; }
.scroll.wide { height: 264px; }

.preview { position: relative; flex: 1; padding: 32px 59px 0 32px; }
.sheet { height: 600px; background: #fff; border-radius: 5px 5px 0 0; padding: 42px 0 0 64px; font-family: "Noto Sans CJK SC", "Noto Sans", sans-serif; color: #2b2b2b; }
.sheet h1 { font-size: 31px; font-weight: 700; line-height: 44px; }
.job { font-size: 12.500px; line-height: 14px; padding-bottom: 1px; }
.columns { display: grid; grid-template-columns: 570px 1fr; padding-top: 42px; }
.letter { font-size: 14px; line-height: 25.600px; padding-top: 1px; }
.letter p { margin-bottom: 8.700px; }
.snug { letter-spacing: -.03px; }
.tight { letter-spacing: -.13px; }
.loose { letter-spacing: .08px; }
.contact { font-size: 14px; line-height: 21.900px; }
.contact h4 { font-size: 14px; font-weight: 700; line-height: 25.300px; }
.contact p { margin-bottom: 19.200px; }
.contact a { color: #1a91f0; letter-spacing: -.13px; }
.pager { position: absolute; left: 430px; top: 533px; width: 98px; height: 36px; border-radius: 18px; background: #0f141e; color: #fff; display: flex; align-items: center; justify-content: space-between; padding: 0 13px; font: 500 14.500px Inter, sans-serif; }
.pager svg { fill: none; stroke: #5b606b; stroke-width: 2; }
.help { position: absolute; right: 20px; top: 523px; width: 60px; height: 60px; border-radius: 50%; background: #2591ec; display: flex; align-items: center; justify-content: center; box-shadow: 0 2px 8px rgba(0, 0, 0, .25); }

.taskbar { height: 40px; flex: none; display: flex; align-items: center; background: linear-gradient(90deg, #213740, #20343f 55%, #1c2943 80%, #1c2a40); color: #fff; }
.start { width: 48px; display: flex; justify-content: center; }
.search { width: 288px; height: 40px; background: #f2f2f2; border: 1px solid #c3c3c3; display: flex; align-items: center; gap: 11px; padding-left: 10px; color: #333; font-size: 14.500px; letter-spacing: -.3px; }
.apps { display: flex; height: 40px; }
.apps span { width: 49.300px; display: flex; align-items: center; justify-content: center; }
.apps svg { width: 24px; height: 24px; }
.apps .on { background: #4c626c; box-shadow: inset 0 -2px #76b9ed; }
.apps .open { background: linear-gradient(#76b9ed, #76b9ed) center bottom / 40px 2px no-repeat; }
.weather { margin-left: 280px; display: flex; align-items: center; gap: 8px; font-size: 13.500px; width: 114px; }
.tray { display: flex; gap: 8px; margin-left: 22px; }
.tray svg { width: 16px; height: 16px; fill: none; stroke: #fff; stroke-width: 1.100; }
.lang, .clock { display: flex; flex-direction: column; align-items: center; font-size: 12px; line-height: 17px; letter-spacing: -.3px; }
.lang { width: 30px; margin-left: 6px; }
.clock { width: 60px; margin-left: 6px; }
.notify { margin-left: 13px; }
.peek { width: 1px; height: 40px; background: #74808c; margin-left: auto; margin-right: 3px; }
```
